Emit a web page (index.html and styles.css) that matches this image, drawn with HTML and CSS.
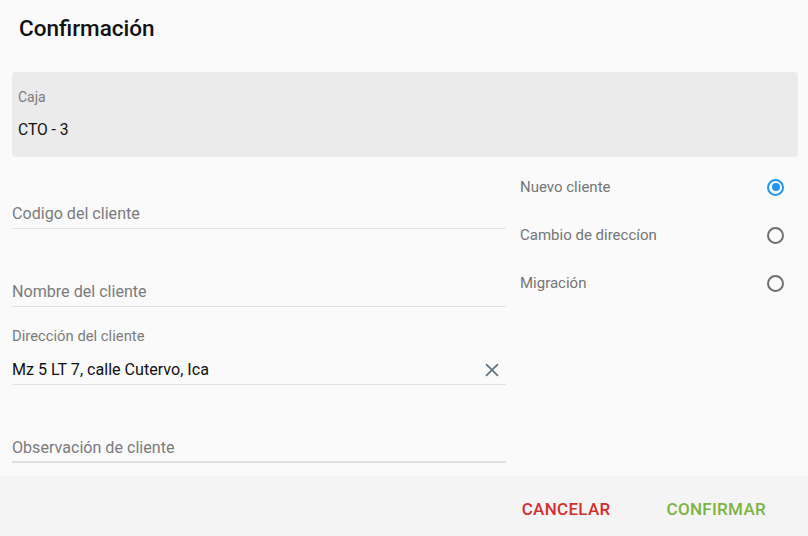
FILE: index.html
```html
<!DOCTYPE html>
<html lang="es">
<head>
<meta charset="utf-8">
<title>Confirmación</title>
<link rel="stylesheet" href="styles.css">
</head>
<body>
<div class="dialog">
  <header class="dialog-header">
    <h1 class="dialog-title">Confirmación</h1>
  </header>
  <section class="dialog-body">
    <div class="readonly-box">
      <div class="readonly-label">Caja</div>
      <div class="readonly-value">CTO - 3</div>
    </div>
    <div class="form-grid">
      <div class="fields">
        <div class="field">
          <div class="field-label"></div>
          <div class="field-input placeholder">Codigo del cliente</div>
        </div>
        <div class="field">
          <div class="field-label"></div>
          <div class="field-input placeholder">Nombre del cliente</div>
        </div>
        <div class="field">
          <div class="field-label">Dirección del cliente</div>
          <div class="field-input">
            <span class="field-value">Mz 5 LT 7, calle Cutervo, Ica</span>
            <svg class="clear-icon" viewBox="0 0 24 24" width="22" height="22" aria-hidden="true">
              <path d="M5.5 5.5 L18.5 18.5 M18.5 5.5 L5.5 18.5" stroke="#5f7580" stroke-width="1.9" fill="none"/>
            </svg>
          </div>
        </div>
        <div class="field">
          <div class="field-label"></div>
          <div class="field-input placeholder">Observación de cliente</div>
        </div>
      </div>
      <div class="options">
        <label class="option">
          <span class="option-text">Nuevo cliente</span>
          <span class="radio checked"></span>
        </label>
        <label class="option">
          <span class="option-text">Cambio de direccíon</span>
          <span class="radio"></span>
        </label>
        <label class="option">
          <span class="option-text">Migración</span>
          <span class="radio"></span>
        </label>
      </div>
    </div>
  </section>
  <footer class="dialog-footer">
    <button class="btn btn-cancel">CANCELAR</button>
    <button class="btn btn-confirm">CONFIRMAR</button>
  </footer>
</div>
</body>
</html>
```

FILE: styles.css
```css
* { box-sizing: border-box; }
html, body {
  margin: 0;
  padding: 0;
  background: #fafafa;
  font-family: Roboto, "Noto Sans", "Liberation Sans", sans-serif;
  color: #111;
}
.dialog {
  width: 808px;
  height: 536px;
  display: flex;
  flex-direction: column;
  background: #fafafa;
}
.dialog-header {
  height: 72px;
  padding: 14px 19px 0;
}
.dialog-title {
  margin: 0;
  font-size: 22.5px;
  line-height: 28px;
  font-weight: 500;
  color: #111;
}
.dialog-body {
  flex: 1;
  padding: 0 10px 0 12px;
}
.readonly-box {
  height: 85px;
  background: #ebebeb;
  border-radius: 4px;
  padding: 16px 6px 0;
}
.readonly-label {
  font-size: 14px;
  line-height: 18px;
  color: #7b7b7b;
}
.readonly-value {
  margin-top: 15px;
  font-size: 15.6px;
  line-height: 18px;
  color: #111;
}
.form-grid {
  display: grid;
  grid-template-columns: 494px 1fr;
}
.fields {
  display: flex;
  flex-direction: column;
}
.field {
  padding-top: 20px;
}
.field:first-child {
  padding-top: 14px;
}
.field-label {
  height: 18px;
  margin-bottom: 10px;
  font-size: 14.8px;
  line-height: 18px;
  color: #7b7b7b;
}
.field-input {
  height: 30px;
  border-bottom: 1px solid #e2e2e2;
  display: flex;
  align-items: center;
  justify-content: space-between;
  font-size: 16.1px;
  line-height: 20px;
  padding-top: 1px;
  color: #111;
}
.field:last-child .field-input {
  border-bottom: 2px solid #e0e0e0;
}
.field-input.placeholder {
  color: #7b7b7b;
}
.clear-icon {
  margin-right: 3px;
  flex: none;
}
.options {
  padding: 6px 14px 0 14px;
  display: flex;
  flex-direction: column;
}
.option {
  height: 48px;
  display: flex;
  align-items: center;
  justify-content: space-between;
  font-size: 15px;
  color: #757575;
}
.radio {
  width: 17px;
  height: 17px;
  border-radius: 50%;
  border: 2px solid #6f6f6f;
  position: relative;
  flex: none;
}
.radio.checked {
  border-color: #2196f3;
}
.radio.checked::after {
  content: "";
  position: absolute;
  left: 2.5px;
  top: 2.5px;
  width: 8px;
  height: 8px;
  border-radius: 50%;
  background: #2196f3;
}
.dialog-footer {
  height: 60px;
  background: #f4f4f4;
  display: flex;
  justify-content: flex-end;
  align-items: center;
  gap: 32px;
  padding: 6px 30px 0 0;
}
.btn {
  border: 0;
  background: transparent;
  font-family: inherit;
  font-size: 17px;
  font-weight: 500;
  letter-spacing: 0.3px;
  padding: 6px 12px;
  cursor: pointer;
}
.btn-cancel { color: #d32f2f; }
.btn-confirm { color: #7cb342; }
```
